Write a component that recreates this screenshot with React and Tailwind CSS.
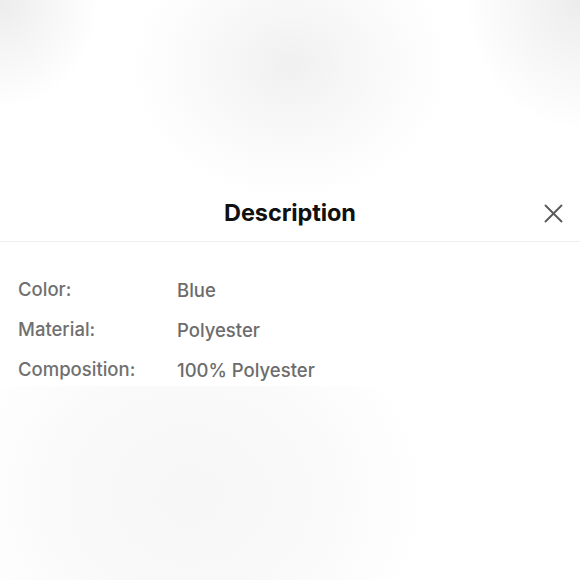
export default function App() {
  const rows = [
    ["Color:", "Blue"],
    ["Material:", "Polyester"],
    ["Composition:", "100% Polyester"],
  ];
  return (
    <div
      className="w-[580px] h-[580px] flex flex-col overflow-hidden bg-white"
      style={{ fontFamily: "Inter, 'Noto Sans', sans-serif" }}
    >
      <div className="h-[193px] shrink-0 bg-[radial-gradient(ellipse_160px_135px_at_290px_65px,#f0f0f0,#f6f6f6_35%,#fbfbfb_70%,#ffffff00),radial-gradient(ellipse_100px_110px_at_0px_0px,#ececec,#f5f5f5_45%,#ffffff00),radial-gradient(ellipse_115px_130px_at_580px_0px,#ececec,#f5f5f5_45%,#ffffff00)]" />
      <div className="h-[193px] shrink-0 bg-white flex flex-col">
        <div className="h-[49px] shrink-0 border-b border-[#eeeeee] flex items-start justify-center relative pt-[4px]">
          <span className="text-[23.5px] leading-[32px] font-bold text-[#111111] tracking-[-0.1px]">Description</span>
          <svg
            className="absolute left-[544px] top-[11px]"
            width="19"
            height="19"
            viewBox="0 0 19 19"
            fill="none"
            stroke="#5a5a5a"
            strokeWidth="1.9"
            strokeLinecap="round"
          >
            <path d="M1.5 1.5 L17.5 17.5 M17.5 1.5 L1.5 17.5" />
          </svg>
        </div>
        <div className="flex flex-col pt-[34px] px-[18px]">
          {rows.map(([k, v]) => (
            <div key={k} className="h-[40px] flex items-start">
              <span className="w-[159px] text-[18.5px] leading-[26px] font-medium text-[#707070]">{k}</span>
              <span className="text-[18.5px] leading-[26px] font-medium text-[#6c6c6c] pt-[1px]">{v}</span>
            </div>
          ))}
        </div>
      </div>
      <div className="flex-1 bg-[radial-gradient(ellipse_240px_210px_at_190px_110px,#f7f7f7,#f9f9f9_50%,#ffffff00)]" />
    </div>
  );
}
